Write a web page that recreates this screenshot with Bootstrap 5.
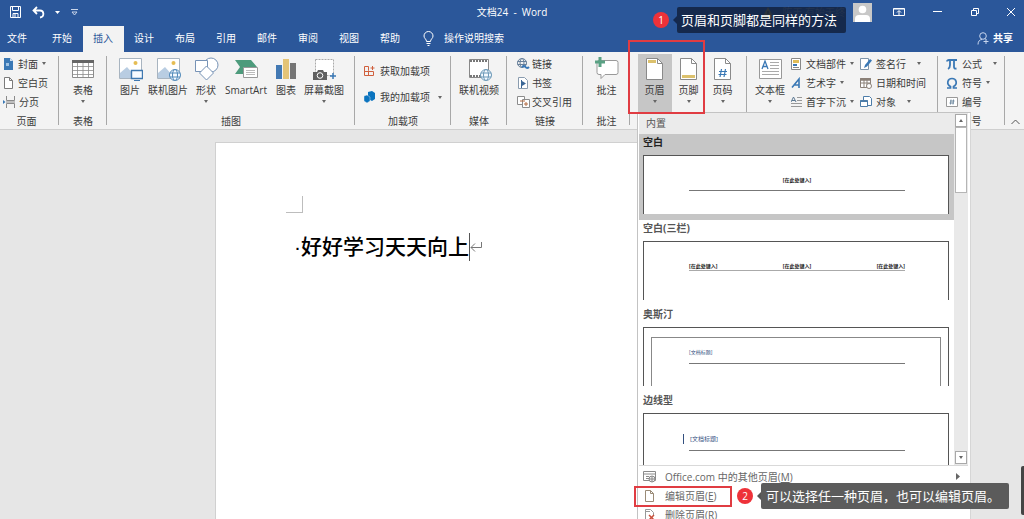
<!DOCTYPE html>
<html lang="zh-CN">
<head>
<meta charset="utf-8">
<meta name="viewport" content="width=device-width, initial-scale=1">
<title>文档24 - Word</title>
<link href="https://cdn.jsdelivr.net/npm/bootstrap@5.3.0/dist/css/bootstrap.min.css" rel="stylesheet">
<style>
  :root { --word: #2b579a; --ink: #3b3b3b; --red: #e03c42; }
  body { font-family: "Open Sans", "Noto Sans CJK SC", sans-serif; font-size: 10px; line-height: 16px; color: var(--ink); background: #e6e6e6; }
  button { border: 0; padding: 0; background: none; color: inherit; font: inherit; text-align: left; }
  svg { display: block; flex: none; }
  .app-top { background: var(--word); color: #fff; }
  .title-row { height: 26px; padding: 0 8px 2px; }
  .title-side { flex: 1 1 0; }
  .win-btn { width: 38px; }
  .win-close { margin-left: 12px; }
  .tab-row { height: 26px; }
  .tab-row a { color: #fff; text-decoration: none; padding: 4px 11px 6px 10px; }
  .tab-row a.file-tab { padding: 4px 15px 6px 7px; }
  .tab-row a.tab-on { background: #f3f3f3; color: var(--word); }
  .account-name { color: #8b98ac; }
  .ribbon { height: 78px; background: #f3f3f3; border-bottom: 1px solid #cfcfcf; }
  .rgroup { position: relative; padding-top: 2px; flex: none; }
  .rgroup::after { content: ""; position: absolute; right: 0; top: 4px; bottom: 4px; border-right: 1px solid #a8a8a8; }
  .rbody { height: 59px; }
  .rname { text-align: center; }
  .w-pages { width: 59px; padding-left: 3px; } .w-pages .rname { padding-right: 9px; }
  .w-table { width: 48px; } .w-illus { width: 248px; } .w-addin { width: 96px; }
  .w-media { width: 56px; } .w-links { width: 76px; } .w-note { width: 47px; }
  .w-head { width: 117px; } .w-text { width: 191px; } .w-sym { width: 67px; }
  .w-links .rbody { padding-left: 10px; }
  .w-links .cmd { gap: 2px; }
  .w-text .cmd-col { margin-left: 6px; }
  .big { width: 30px; height: 58px; padding-top: 3px; display: flex; flex-direction: column; align-items: center; white-space: nowrap; }
  .big svg { margin-bottom: 1px; }
  .big.w34 { width: 34px; } .big.w46 { width: 46px; } .big.w50 { width: 50px; }
  .big.pressed { background: #c6c6c6; }
  .big .tri { margin-top: 2px; }
  .tri { width: 0; height: 0; border: 2px solid transparent; border-top: 3px solid #666; border-bottom: 0; }
  .cmd { height: 19px; display: flex; align-items: center; gap: 4px; white-space: nowrap; }
  .cmd.tall { height: 26px; }
  .gap-wide { margin-left: 7px; }
  .canvas-area { padding-top: 12px; min-height: 0; }
  .paper { width: 58%; height: 100%; padding: 53px 70px 0; background: #fff; border: 1px solid #d0d0d0; border-bottom: 0; margin: 0 auto; }
  .crop-mark { width: 17px; height: 17px; border: solid #bdbdbd; border-width: 0 1px 1px 0; }
  .doc-line { margin: 20px 0 0 8px; font-size: 21px; line-height: 28px; font-weight: 500; color: #000; font-family: "Liberation Sans", "Noto Sans CJK SC", sans-serif; white-space: nowrap; }
  .text-cursor { width: 1px; height: 28px; background: #555; }
  .gallery { position: absolute; left: 7px; top: 60px; width: 334px; z-index: 5; background: #fff; border: 1px solid #c3c3c3; border-right-color: #d6d6d6; padding: 0 2px 0 1px; }
  .gal-scroll { height: 353px; border-bottom: 1px solid #d9d9d9; }
  .gal-head { background: #ebebeb; height: 21px; padding: 2px 7px; color: #555; }
  .gal-item { display: flex; flex-direction: column; align-items: stretch; justify-content: flex-start; width: 100%; height: 86px; padding: 0 5px 0 4px; }
  .gal-item.chosen { background: #c6c6c6; }
  .gal-item b { height: 21px; font-weight: 700; color: #555; }
  .gal-item.chosen b { color: #222; }
  .thumb { display: block; height: 59px; background: #fff; border: 1px solid #555; border-bottom: 0; overflow: hidden; color: #222; font-size: 5px; line-height: 7px; font-weight: 700; }
  .thumb .hline { display: flex; margin: 21px 43px 0 45px; border-bottom: 1px solid #777; padding-bottom: 6px; }
  .thumb .tight { padding-bottom: 0; border-color: #aaa; }
  .thumb .blue { color: #33507f; font-weight: 400; }
  .thumb .framed { display: block; height: 60px; margin: 9px 7px 0; border: 1px solid #888; }
  .framed .hline { margin: 11px 35px 0 37px; padding-bottom: 7px; }
  .thumb .barred { display: block; border-left: 1px solid #33507f; padding-left: 6px; font-size: 6px; line-height: 10px; }
  .thumb .lined { display: block; margin: 20px 43px 0 39px; }
  .lined .rule { display: block; margin: 6px 0 0 6px; border-bottom: 1px solid #777; }
  .gal-bar { width: 14px; background: #e9e9e9; padding: 1px; }
  .gal-bar button { height: 13px; border: 1px solid #a9a9a9; background: #fff; display: flex; align-items: center; justify-content: center; }
  .gal-thumb { height: 66px; background: #fff; border: 1px solid #b5b5b5; }
  .up { transform: rotate(180deg); }
  .gal-cmd { position: relative; height: 19px; width: 100%; display: flex; align-items: center; gap: 9px; padding-left: 4px; color: #666; white-space: nowrap; }
  .gal-cmds { padding: 1px 0; }
  .redbox { position: absolute; border: 2px solid var(--red); z-index: 8; pointer-events: none; }
  .box-head { left: -2px; top: -12px; width: 77px; height: 74px; }
  .box-edit { left: -5px; top: 0; width: 98px; height: 21px; }
  .tip { position: absolute; z-index: 9; display: flex; align-items: center; gap: 8px; color: #fff; font-size: 13px; line-height: 26px; white-space: nowrap; }
  .tip-one { right: 178px; top: 7px; }
  .tip-two { left: 98px; top: -3px; }
  .tip i { width: 16px; height: 16px; border-radius: 50%; background: #ee3239; font-style: normal; font-size: 10px; line-height: 16px; text-align: center; }
  .tip span { position: relative; background: #12233fdd; padding: 0 9px 0 4px; border-radius: 2px; }
  .tip-two span { background: #555555f5; padding: 0 9px 0 5px; }
  .tip span::before { content: ""; position: absolute; left: -4px; top: 9px; border: 4px solid transparent; border-right-color: #14284d; border-left: 0; }
  .tip-two span::before { border-right-color: #555; }
  .side-tab { position: absolute; right: 0; bottom: 4px; width: 3px; height: 49px; background: #444; border-radius: 2px 0 0 2px; }
</style>
</head>
<body class="vh-100 overflow-hidden position-relative d-flex flex-column">
<header class="app-top">
  <div class="title-row d-flex align-items-center position-relative">
    <div class="title-side d-flex align-items-center gap-2">
      <button aria-label="保存"><svg width="15" height="12" viewBox="0 0 15 12" fill="none" stroke="#fff"><path d="M2.500 .5h10v11h-10z"/><path d="M4.500 .5v4h6v-4M5 11V7.500h5V11M7 8v3"/></svg></button>
      <button class="d-flex align-items-center gap-2" aria-label="撤消"><svg width="16" height="13" viewBox="0 0 16 13" fill="none" stroke="#fff" stroke-width="1.8"><path d="M6 1 2.500 4.500 6 8M3 4.500h6c4 0 5 6 0 7"/></svg><svg width="5" height="3"><path d="M0 0h5L2.500 3z" fill="#fff"/></svg></button>
      <button aria-label="自定义快速访问工具栏"><svg width="13" height="7" viewBox="0 0 13 7" fill="none" stroke="#c9d5ea"><path d="M3 .5h7M4 3h5L6.500 6z"/></svg></button>
    </div>
    <div>文档24&nbsp; -&nbsp; Word</div>
    <div class="title-side d-flex align-items-center justify-content-end">
      <svg width="12" height="11" viewBox="0 0 12 11"><path d="M6 0l6 11H0z" fill="#c79b22"/><path d="M6 4v3M6 8v1" stroke="#222"/></svg>
      <span class="account-name ms-2 me-2">陈王 有始无终</span>
      <svg width="19" height="19" viewBox="0 0 19 19"><path fill="#c8c8c8" d="M0 0h19v19H0z"/><circle cx="9.500" cy="6.500" r="3.800" fill="#fff"/><path d="M2 19v-3q0-4 4-4h7q4 0 4 4v3z" fill="#fff"/></svg>
      <button class="win-btn ms-2" aria-label="功能区显示选项"><svg class="mx-auto" width="12" height="10" viewBox="0 0 12 10" fill="none" stroke="#fff"><path d="M.5 1.500h11v7H.5zM.5 2h11M6 8V4M4 5.500l2-2 2 2"/></svg></button>
      <button class="win-btn" aria-label="最小化"><svg class="mx-auto" width="9" height="2"><path d="M0 0h9v1H0z" fill="#fff"/></svg></button>
      <button class="win-btn" aria-label="还原"><svg class="mx-auto" width="10" height="10" viewBox="0 0 10 10" fill="none" stroke="#fff"><path d="M1.500 3.500h5v5h-5zM3.500 3V1.500h5v5H7"/></svg></button>
      <button class="win-close" aria-label="关闭"><svg width="10" height="10" viewBox="0 0 10 10" stroke="#fff"><path d="M1 1l8 8M9 1 1 9"/></svg></button>
    </div>
    <div class="tip tip-one"><i>1</i><span>页眉和页脚都是同样的方法</span></div>
  </div>
  <nav class="tab-row d-flex align-items-stretch" aria-label="功能区选项卡">
    <a class="file-tab" href="#">文件</a><a href="#">开始</a><a class="tab-on" href="#" aria-current="page">插入</a><a href="#">设计</a><a href="#">布局</a><a href="#">引用</a><a href="#">邮件</a><a href="#">审阅</a><a href="#">视图</a><a href="#">帮助</a>
    <a href="#" class="d-flex align-items-center gap-2"><svg width="15" height="15" viewBox="0 0 15 15" fill="none" stroke="#fff"><path d="M5.500 10.500C5.500 8 3 7.500 3 5a4.500 4.500 0 0 1 9 0c0 2.500-2.500 3-2.500 5.500zM5.500 12.500h4M6.500 14.500h2"/></svg>操作说明搜索</a>
    <a href="#" class="d-flex align-items-center gap-1 ms-auto fw-bold"><svg width="12" height="13" viewBox="0 0 12 13" fill="none" stroke="#c8d6ee"><circle cx="6" cy="4" r="3.300"/><path d="M1 12.500C1 9 3 7.500 5 7.500M9 7v5M6.500 9.500h5M8 6.500l1 1"/></svg>共享</a>
  </nav>
</header>

<section class="ribbon d-flex flex-shrink-0" aria-label="插入">
  <div class="rgroup w-pages">
    <div class="rbody">
      <button class="cmd"><svg width="11" height="12" viewBox="0 0 11 12"><path d="M1 0h6l3 3v9H1z" fill="#3a78b5"/><path d="M7 0v3h3" fill="#cfe0f0"/><path d="M3 5h3v3H3z" fill="#9fc3e4"/></svg>封面<span class="tri"></span></button>
      <button class="cmd"><svg width="11" height="12" viewBox="0 0 11 12" fill="#fff" stroke="#7b7b7b"><path d="M1.500 .5h5l3 3v8h-8zM6.500 .5v3h3"/></svg>空白页</button>
      <button class="cmd"><svg width="12" height="12" viewBox="0 0 12 12" fill="none" stroke="#8a8a8a"><path d="M3.500 0v4.500h8V0M3.500 12V7.500h8V12M3 6h9"/><path d="M0 4l2.500 2L0 8z" fill="#3a78b5" stroke="none"/></svg>分页</button>
    </div><div class="rname">页面</div>
  </div>
  <div class="rgroup w-table">
    <div class="rbody d-flex justify-content-center"><button class="big"><svg width="24" height="24" viewBox="0 0 24 24" fill="#fff" stroke="#8c8c8c"><path d="M1.500 3.500h21v17h-21z"/><path d="M1 3h22v3H1z" fill="#666" stroke="none"/><path d="M1.500 9.500h21M1.500 13.500h21M1.500 17.500h21M6.500 6v15M12 6v15M17.500 6v15" stroke-width=".8"/></svg>表格<span class="tri"></span></button></div>
    <div class="rname">表格</div>
  </div>
  <div class="rgroup w-illus">
    <div class="rbody d-flex justify-content-center">
      <button class="big"><svg width="25" height="24" viewBox="0 0 25 24"><path d="M1.500 1.500h22v20h-22z" fill="#fff" stroke="#a8b4c0"/><circle cx="17.500" cy="6" r="2" fill="#e5bd53"/><path d="M2 21v-5l7-6 8 9v2z" fill="#b9cde2"/><path d="M13.500 13.500h11v8h-11z" fill="#f8fbff" stroke="#3f78b0" stroke-width="1.400"/><path d="M16 23.500h6" stroke="#3f78b0"/></svg>图片</button>
      <button class="big w46"><svg width="25" height="24" viewBox="0 0 25 24"><path d="M1.500 1.500h22v20h-22z" fill="#fff" stroke="#a8b4c0"/><circle cx="17.500" cy="6" r="2" fill="#e5bd53"/><path d="M2 21v-5l7-6 8 9v2z" fill="#b9cde2"/><g fill="#f5faff" stroke="#5189b9"><circle cx="19" cy="18" r="5.500"/><ellipse cx="19" cy="18" rx="2.500" ry="5.500"/><path d="M14 16h10M14 20h10"/></g></svg>联机图片</button>
      <button class="big"><svg width="25" height="24" viewBox="0 0 25 24" fill="#fff" stroke="#7793b6"><circle cx="17" cy="8" r="7"/><path d="M1.500 3.500h12v11h-12z"/><path d="M12.500 9l7 7-7 7-7-7z"/></svg>形状<span class="tri"></span></button>
      <button class="big w50"><svg width="26" height="24" viewBox="0 0 26 24"><path d="M2 3h16l6 7-6 7H2l5-7z" fill="#4d9b7c"/><path d="M10.500 10.500h14v10h-14z" fill="#fff" stroke="#999"/><path d="M13 13.500h9M13 15.500h9M13 17.500h9" stroke="#bbb"/></svg>SmartArt</button>
      <button class="big"><svg width="22" height="24" viewBox="0 0 22 24"><path d="M1 8h6v14H1z" fill="#4379b3"/><path d="M8 2h6v20H8z" fill="#e4c477"/><path d="M15 6h6v16h-6z" fill="#757575"/></svg>图表</button>
      <button class="big w46"><svg width="25" height="24" viewBox="0 0 25 24"><path d="M3.500 2.500h18v16h-18z" fill="#fff" stroke="#aaa" stroke-dasharray="2 1"/><path d="M1 15h4l1-2h5l1 2h3v8H1z" fill="#606060"/><circle cx="8" cy="18.500" r="2.800" fill="#606060" stroke="#fff"/><path d="M21 16v6M18 19h6" stroke="#3a78b5" stroke-width="1.500"/></svg>屏幕截图<span class="tri"></span></button>
    </div><div class="rname">插图</div>
  </div>
  <div class="rgroup w-addin">
    <div class="rbody ps-2 pt-1">
      <button class="cmd tall"><svg width="13" height="12" viewBox="0 0 13 12" fill="none" stroke="#d0603e"><path d="M1.500 1.500h4v4M1.500 1.500v9h9v-4h-9M5.500 5.500v5M9.500 1v4M7.500 3h4"/></svg>获取加载项</button>
      <button class="cmd tall"><svg width="13" height="12" viewBox="0 0 13 12" fill="#0b74bf"><path d="M5 1l4-1 3 2v6l-3 2-4-2z"/><path d="M1 5l3-1 3 2v4l-3 2-3-2z" stroke="#f3f3f3" stroke-width=".4"/></svg>我的加载项<span class="tri ms-1"></span></button>
    </div><div class="rname">加载项</div>
  </div>
  <div class="rgroup w-media">
    <div class="rbody d-flex justify-content-center"><button class="big w46"><svg width="25" height="24" viewBox="0 0 25 24"><path d="M2.500 2.500h19v18h-19z" fill="#fff" stroke="#888"/><path d="M3 4h18M3 19h18" stroke="#777" stroke-width="2" stroke-dasharray="2 1"/><g fill="#f5faff" stroke="#6b98b7"><circle cx="19" cy="18" r="5.500"/><ellipse cx="19" cy="18" rx="2.500" ry="5.500"/><path d="M14 16h10M14 20h10"/></g></svg>联机视频</button></div>
    <div class="rname">媒体</div>
  </div>
  <div class="rgroup w-links">
    <div class="rbody">
      <button class="cmd"><svg width="13" height="12" viewBox="0 0 13 12" fill="none" stroke="#68809a"><circle cx="5" cy="5" r="4.500"/><ellipse cx="5" cy="5" rx="2" ry="4.500"/><path d="M.5 3.500h9M.5 6.500h9"/><path d="M5 9q2-2 3.500 0T12 9" stroke="#3978b8" stroke-width="2"/></svg>链接</button>
      <button class="cmd"><svg width="13" height="12" viewBox="0 0 13 12" fill="#fff" stroke="#8a9caf"><path d="M1.500 .5h6l3 3v8h-9z"/><path d="M5 4l4 2.500L5 9z" fill="#3a6696" stroke="none"/><path d="M4.500 3v8" stroke="#3a6696"/></svg>书签</button>
      <button class="cmd"><svg width="13" height="12" viewBox="0 0 13 12" fill="#fff" stroke="#8c8c8c"><path d="M.5 .5h7v8h-7z"/><path d="M5.500 3.500h7v8h-7z"/><path d="M3 5h5M7 8h4M9 6v4" stroke="#b46a40"/></svg>交叉引用</button>
    </div><div class="rname">链接</div>
  </div>
  <div class="rgroup w-note">
    <div class="rbody d-flex justify-content-center"><button class="big"><svg width="26" height="24" viewBox="0 0 26 24"><path d="M5 3.500h17q2 0 2 2v10q0 2-2 2H11l-4 4v-4H5q-2 0-2-2v-10q0-2 2-2z" fill="#fff" stroke="#999"/><path d="M6 0v10M1 5h10" stroke="#5aa184" stroke-width="3"/></svg>批注</button></div>
    <div class="rname">批注</div>
  </div>
  <div class="rgroup w-head" role="group" aria-label="页眉和页脚">
    <div class="rbody d-flex justify-content-center">
      <button class="big w34 pressed" aria-expanded="true"><svg width="20" height="24" viewBox="0 0 20 24"><path d="M1.500 1.500h11l5 5v16h-16z" fill="#fff" stroke="#8a8a8a"/><path d="M12.500 1.500v5h5" fill="none" stroke="#8a8a8a"/><path d="M3 3h8v3H3z" fill="#dcc16d"/></svg>页眉<span class="tri"></span></button>
      <button class="big w34"><svg width="20" height="24" viewBox="0 0 20 24"><path d="M1.500 1.500h11l5 5v16h-16z" fill="#fff" stroke="#8a8a8a"/><path d="M12.500 1.500v5h5" fill="none" stroke="#8a8a8a"/><path d="M3 18h13v3H3z" fill="#dcc16d"/></svg>页脚<span class="tri"></span></button>
      <button class="big w34"><svg width="20" height="24" viewBox="0 0 20 24"><path d="M1.500 1.500h11l5 5v16h-16z" fill="#fff" stroke="#8a8a8a"/><path d="M12.500 1.500v5h5" fill="none" stroke="#8a8a8a"/><path d="M8.500 12l-1.500 8M12.500 12L11 20M6 14.500h8M5.500 17.500h8" stroke="#3a78b5" stroke-width="1.200"/></svg>页码<span class="tri"></span></button>
    </div>
    <div class="redbox box-head"></div>
    <div class="gallery">
      <div class="gal-scroll d-flex">
        <div class="flex-fill overflow-hidden">
          <div class="gal-head">内置</div>
          <button class="gal-item chosen"><b>空白</b><span class="thumb"><span class="hline justify-content-center">[在此处键入]</span></span></button>
          <button class="gal-item"><b>空白(三栏)</b><span class="thumb"><span class="hline tight justify-content-between"><span>[在此处键入]</span><span>[在此处键入]</span><span>[在此处键入]</span></span></span></button>
          <button class="gal-item"><b>奥斯汀</b><span class="thumb"><span class="framed"><span class="hline blue">[文档标题]</span></span></span></button>
          <button class="gal-item"><b>边线型</b><span class="thumb"><span class="lined blue"><span class="barred">[文档标题]</span><span class="rule"></span></span></span></button>
        </div>
        <div class="gal-bar d-flex flex-column">
          <button aria-label="向上滚动"><span class="tri up"></span></button>
          <div class="gal-thumb"></div>
          <button class="mt-auto" aria-label="向下滚动"><span class="tri"></span></button>
        </div>
      </div>
      <div class="gal-cmds">
        <button class="gal-cmd"><svg width="13" height="12" viewBox="0 0 13 12" fill="none" stroke="#8a8a8a"><path d="M.5 .5h12v9H.5zM.5 3h12M3 5.500h3M3 7.500h3"/><circle cx="9" cy="8" r="3" fill="#eee"/><path d="M6 8h6M9 5v6"/></svg><span>Office.com 中的其他页眉(<u>M</u>)</span><svg class="ms-auto me-2" width="4" height="7"><path d="M0 0l4 3.500L0 7z" fill="#666"/></svg></button>
        <div class="position-relative">
          <button class="gal-cmd"><svg width="13" height="12" viewBox="0 0 13 12" fill="#fff" stroke="#9a8b77"><path d="M2.500 .5h5l3 3v8h-8zM7.500 .5v3h3"/></svg><span>编辑页眉(<u>E</u>)</span></button>
          <div class="redbox box-edit"></div>
          <div class="tip tip-two"><i>2</i><span>可以选择任一种页眉，也可以编辑页眉。</span></div>
        </div>
        <button class="gal-cmd"><svg width="13" height="12" viewBox="0 0 13 12" fill="none" stroke="#999"><path d="M2.500 11V.5h5l3 3v3M3 2.500h4"/><path d="M6 6l5 5M11 6l-5 5" stroke="#c8503c" stroke-width="1.500"/></svg><span>删除页眉(<u>R</u>)</span></button>
      </div>
    </div>
  </div>
  <div class="rgroup w-text" role="group" aria-label="文本">
    <div class="rbody d-flex ps-2">
      <button class="big"><svg width="25" height="24" viewBox="0 0 25 24"><path d="M1.500 2.500h22v19h-22z" fill="#fff" stroke="#999"/><path d="M4 12l3-8 3 8M5 9.500h4" fill="none" stroke="#3a78b5" stroke-width="1.300"/><path d="M12 5.500h9M12 8.500h9M12 11.500h9M4 14.500h17M4 17.500h17" stroke="#aaa"/></svg>文本框<span class="tri"></span></button>
      <div class="cmd-col">
        <button class="cmd"><svg width="11" height="12" viewBox="0 0 11 12"><path d="M.5 .5h9v11h-9z" fill="#fff" stroke="#888"/><path d="M2 2h6v3H2z" fill="#e0bd58"/><path d="M2 6h4v2H2z" fill="#3a78b5"/><path d="M2 9.500h6" stroke="#888"/></svg>文档部件<span class="tri"></span></button>
        <button class="cmd"><svg width="11" height="12" viewBox="0 0 11 12" fill="none" stroke="#3a78b5" stroke-width="1.600"><path d="M1 10.500 8 2v9M3.500 8H8"/></svg>艺术字<span class="tri"></span></button>
        <button class="cmd"><svg width="11" height="12" viewBox="0 0 11 12" fill="none" stroke="#999"><path d="M0 6l2.500-5L5 6M1 4.500h3" stroke="#5c7892"/><path d="M6 1.500h5M6 4.500h5M0 7.500h11M0 10.500h11"/></svg>首字下沉<span class="tri"></span></button>
      </div>
      <div class="cmd-col">
        <button class="cmd"><svg width="12" height="12" viewBox="0 0 12 12"><path d="M.5 .5h8v11h-8z" fill="#fff" stroke="#7f95aa"/><path d="M4 10l1-3 5-6 2 1.500-5 6z" fill="#3a78b5"/></svg>签名行<span class="tri gap-wide"></span></button>
        <button class="cmd"><svg width="12" height="12" viewBox="0 0 12 12" fill="#fff" stroke="#8b8178"><path d="M.5 1.500h10v9H.5z"/><path d="M0 2.500h11" stroke-width="2.500"/><path d="M.5 6h10M4 3v7M7 3v7"/><circle cx="9" cy="9" r="2.500"/></svg>日期和时间</button>
        <button class="cmd"><svg width="12" height="12" viewBox="0 0 12 12" fill="#fff" stroke="#4d7da9"><path d="M3.500 .5h6l2 2v7h-8z"/><path d="M.5 4.500h7v6h-7z"/><path d="M.5 5h7" stroke-width="2"/></svg>对象<span class="tri gap-wide"></span></button>
      </div>
    </div>
  </div>
  <div class="rgroup w-sym">
    <div class="rbody ps-2">
      <button class="cmd"><svg width="12" height="12" viewBox="0 0 12 12" fill="none" stroke="#3a78b5" stroke-width="1.800"><path d="M1 3.500Q1 2 3 2h8M4 2v5q0 3-2 4M8 2v7q0 2 2.500 1.500"/></svg>公式<span class="tri gap-wide"></span></button>
      <button class="cmd"><svg width="12" height="12" viewBox="0 0 12 12" fill="none" stroke="#3a78b5" stroke-width="1.700"><path d="M1 11h3.500V9.500C0 7 1.500 1.500 6 1.500s6 5.500 1.500 8V11H11"/></svg>符号<span class="tri"></span></button>
      <button class="cmd"><svg width="12" height="12" viewBox="0 0 12 12" fill="#fff" stroke="#999"><path d="M.5 1.500h11v9H.5z"/><path d="M5 3.500l-.5 5M7.500 3.500l-.5 5M4 5h4.500M3.500 7H8" stroke="#5c7892" stroke-width=".8"/></svg>编号</button>
    </div><div class="rname">符号</div>
  </div>
  <button class="ms-auto mt-auto me-1 mb-1" aria-label="折叠功能区"><svg width="9" height="6" viewBox="0 0 9 6" fill="none" stroke="#555"><path d="M.5 5l4-4 4 4"/></svg></button>
</section>

<main class="canvas-area flex-fill">
  <article class="paper">
    <div class="crop-mark"></div>
    <div class="doc-line d-flex align-items-center"><span>·好好学习天天向上</span><span class="text-cursor"></span><svg width="13" height="12" viewBox="0 0 13 12" fill="none" stroke="#777"><path d="M11.500 1v5.500H1M5 2.500l-4 4 4 4"/></svg></div>
  </article>
</main>
<div class="side-tab"></div>
<script src="https://cdn.jsdelivr.net/npm/bootstrap@5.3.0/dist/js/bootstrap.bundle.min.js"></script>
</body>
</html>
